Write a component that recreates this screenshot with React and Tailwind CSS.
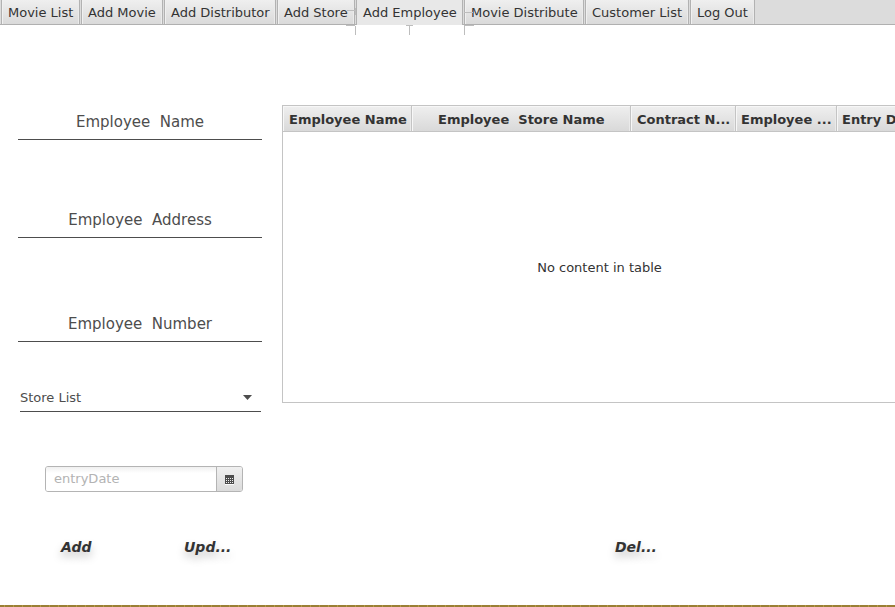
import React from "react";

const tabs = [
  { label: "Movie List", w: "w-[79px]" },
  { label: "Add Movie", w: "w-[82px]" },
  { label: "Add Distributor", w: "w-[112px]" },
  { label: "Add Store", w: "w-[78px]" },
  { label: "Add Employee", w: "w-[107px]", active: true },
  { label: "Movie Distribute", w: "w-[120px]" },
  { label: "Customer List", w: "w-[104px]" },
  { label: "Log Out", w: "w-[65px]" },
];

const columns = [
  { label: "Employee Name", w: "w-[129px] pl-[6px]" },
  { label: "Employee  Store Name", w: "w-[219px] pl-[26px]" },
  { label: "Contract N...", w: "w-[105px] pl-[6px]" },
  { label: "Employee ...", w: "w-[101px] pl-[5px]" },
  { label: "Entry Date", w: "w-[90px] pl-[5px]" },
];

function TabBar() {
  return (
    <nav className="relative flex h-[25px] gap-px border-b border-[#b0b0b0] bg-[#dcdcdc] pl-px">
      {tabs.map((t) => (
        <div
          key={t.label}
          className={`${t.w} shrink-0 whitespace-pre border-x border-[#b2b2b2] pl-[6px] leading-[25px] ${
            t.active
              ? "h-[25px] bg-[#e8e8e8]"
              : "h-6 bg-linear-to-b from-[#efefef] to-[#dadada] shadow-[inset_1px_0_#f0f0f0,inset_-1px_0_#ebebeb]"
          }`}
        >
          {t.label}
        </div>
      ))}
      <svg
        className="absolute left-[346px] top-0"
        width="128"
        height="36"
        fill="none"
        stroke="#bdbdbd"
        shapeRendering="crispEdges"
      >
        <path d="M1 10.5H9M0 25.5H9M9.5 8V15M9.5 26V35M60 25.5H67M63.5 26V35M118 12.5H127M118 25.5H128M118.5 26V35" />
      </svg>
    </nav>
  );
}

function Field({ label, className }) {
  return (
    <div
      className={`ml-[18px] h-9 w-[244px] whitespace-pre border-b border-[#4d4d4d] text-center text-[15px] leading-9 text-[#4d4d4d] ${className}`}
    >
      {label}
    </div>
  );
}

function Table() {
  return (
    <section className="mt-20 flex h-[298px] w-[613px] flex-col overflow-hidden border border-r-0 border-[#c4c4c4]">
      <div className="flex h-[26px] shrink-0 border-b border-[#c4c4c4] font-bold">
        {columns.map((c) => (
          <div
            key={c.label}
            className={`${c.w} shrink-0 whitespace-pre border-r border-[#c4c4c4] bg-linear-to-b from-[#efefef] to-[#d9d9d9] leading-[27px] shadow-[inset_1px_1px_#f7f7f7,inset_-1px_0_#eaeaea]`}
          >
            {c.label}
          </div>
        ))}
      </div>
      <div className="flex flex-1 items-center justify-center pl-[21px] pt-0.5">No content in table</div>
    </section>
  );
}

function CalendarIcon() {
  return (
    <svg width="9" height="10" viewBox="0 0 9 10" shapeRendering="crispEdges">
      <path fill="#4d4d4d" d="M0 0H9V9H0z" />
      <path stroke="#eeeeee" strokeDasharray="1 1" d="M1 3.5H8M1 5.5H8M1 7.5H8" />
      <path stroke="#fafafa" d="M0 9.5H9" />
    </svg>
  );
}

export default function App() {
  return (
    <div className="flex h-[607px] w-[895px] flex-col overflow-hidden bg-white font-['DejaVu_Sans',sans-serif] text-[13px] text-[#333]">
      <TabBar />
      <main className="flex h-[500px] shrink-0">
        <div className="w-[282px] shrink-0">
          <Field label="Employee  Name" className="mt-[79px]" />
          <Field label="Employee  Address" className="mt-[62px]" />
          <Field label="Employee  Number" className="mt-[68px]" />
          <div className="ml-5 mt-[42px] flex h-7 w-[241px] items-center justify-between border-b border-[#4d4d4d] pr-[9px] text-[#4d4d4d]">
            <span>Store List</span>
            <svg width="9" height="5" viewBox="0 0 9 5">
              <path fill="#4d4d4d" d="M0 0H9L4.5 5z" />
            </svg>
          </div>
          <div className="ml-[45px] mt-[54px] flex h-[26px] w-[198px] overflow-hidden rounded-[3px] border border-[#b4b4b4]">
            <div className="flex-1 bg-linear-to-b from-[#f0f0f0] to-white to-25% pl-2 leading-6 text-[#b3b3b3]">
              entryDate
            </div>
            <div className="flex w-[26px] items-center justify-center border-l border-[#b4b4b4] bg-linear-to-b from-[#f0f0f0] to-[#dbdbdb] pt-0.5">
              <CalendarIcon />
            </div>
          </div>
        </div>
        <Table />
      </main>
      <footer className="flex h-20 shrink-0 pl-[61px] pt-3 text-[14px] font-bold italic leading-5 [text-shadow:0_5px_8px_rgba(0,0,0,0.25)]">
        <span className="w-[123px]">Add</span>
        <span className="w-[431px]">Upd...</span>
        <span>Del...</span>
      </footer>
      <div className="h-0.5 shrink-0 bg-[repeating-linear-gradient(90deg,#9a7f35_0px,#9a7f35_4px,#b59a48_4px,#b59a48_5px,#9a7f35_5px,#9a7f35_9px)]" />
    </div>
  );
}
